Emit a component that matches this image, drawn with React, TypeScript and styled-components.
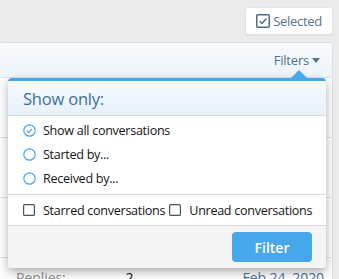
import React from 'react';
import styled, { createGlobalStyle } from 'styled-components';

const GlobalStyle = createGlobalStyle`
  html, body {
    margin: 0;
    padding: 0;
    background: #ebebeb;
    overflow: hidden;
  }
  body {
    width: 339px;
    height: 279px;
    font-family: "Open Sans", "Noto Sans", sans-serif;
  }
`;

const App = () => {
  return (
    <Page>
      <GlobalStyle />
      <TopBar>
        <SelectedButton>
          <svg width="14" height="14" viewBox="0 0 14 14">
            <rect x="0.75" y="0.75" width="12.5" height="12.5" rx="1" fill="none" stroke="#4f6b86" strokeWidth="1.5" />
            <path d="M3.6 7.2 L6 9.5 L10.4 4.6" fill="none" stroke="#4f6b86" strokeWidth="1.5" />
          </svg>
          Selected
        </SelectedButton>
      </TopBar>
      <Block>
        <BlockHeader>
          <FiltersLink>
            Filters <Caret />
          </FiltersLink>
        </BlockHeader>
        <ListRow />
        <ListRow />
        <ListRow />
        <ListRow>
          <RowMeta>
            <span className="label">Replies:</span>
            <span className="count">2</span>
            <span className="date">Feb 24, 2020</span>
          </RowMeta>
        </ListRow>

        {/* -------- filter menu -------- */}
        <Menu>
          <MenuArrow />
          <MenuHeader>Show only:</MenuHeader>
          <OptionList>
            <Option>
              <Radio checked />
              Show all conversations
            </Option>
            <Option>
              <Radio />
              Started by...
            </Option>
            <Option>
              <Radio />
              Received by...
            </Option>
          </OptionList>
          <CheckRow>
            <CheckLabel>
              <CheckBox />
              Starred conversations
            </CheckLabel>
            <CheckLabel>
              <CheckBox />
              Unread conversations
            </CheckLabel>
          </CheckRow>
          <MenuFooter>
            <FilterButton>Filter</FilterButton>
          </MenuFooter>
        </Menu>
      </Block>
    </Page>
  );
};

export default App;

const Radio = ({ checked }: { checked?: boolean }) => (
  <svg width="13" height="13" viewBox="0 0 13 13">
    <circle cx="6.5" cy="6.5" r="5.7" fill="none" stroke="#47a7eb" strokeWidth="1.2" />
    {checked && <path d="M3.9 6.7 L5.8 8.5 L9.1 4.9" fill="none" stroke="#47a7eb" strokeWidth="1.2" />}
  </svg>
);

const CheckBox = () => (
  <svg width="12" height="12" viewBox="0 0 12 12">
    <rect x="0.6" y="0.6" width="10.8" height="10.8" rx="1" fill="none" stroke="#4b5557" strokeWidth="1.2" />
  </svg>
);

const Page = styled.div`
  padding: 7px 6px 0 0;
`;

const TopBar = styled.div`
  display: flex;
  justify-content: flex-end;
`;

const SelectedButton = styled.button`
  display: flex;
  align-items: center;
  gap: 3px;
  height: 28px;
  padding: 0 10px;
  background: #fff;
  border: 1px solid #e3e3e3;
  border-radius: 3px;
  box-shadow: 0 1px 1px rgba(0, 0, 0, 0.06);
  color: #5a7390;
  font-family: inherit;
  font-size: 13px;
  letter-spacing: -0.3px;
`;

const Block = styled.div`
  position: relative;
  margin-top: 7px;
  margin-left: -2px;
  background: #fff;
  border: 1px solid #dcdfe3;
  border-radius: 3px;
`;

const BlockHeader = styled.div`
  display: flex;
  justify-content: flex-end;
  align-items: center;
  height: 34px;
  padding-right: 12px;
  background: linear-gradient(#f7fafd, #eef4fa);
  border-bottom: 1px solid #dce3ea;
  border-radius: 3px 3px 0 0;
`;

const FiltersLink = styled.span`
  display: flex;
  align-items: center;
  gap: 3px;
  color: #4d7196;
  font-size: 13px;
  letter-spacing: -0.2px;
`;

const Caret = styled.span`
  width: 0;
  height: 0;
  border-left: 4px solid transparent;
  border-right: 4px solid transparent;
  border-top: 5px solid #4d7196;
`;

const ListRow = styled.div`
  height: 59px;
  background: #fdfdfd;
  border-bottom: 1px solid #e2e2e2;
  &:first-of-type {
    height: 58px;
  }
`;

const RowMeta = styled.div`
  display: flex;
  padding: 10px 8px 0 17px;
  font-size: 14px;
  letter-spacing: -0.1px;
  color: #8c8c8c;
  .count {
    margin-left: 60px;
    color: #141414;
  }
  .date {
    margin-left: auto;
    color: #47709a;
  }
`;

const Menu = styled.div`
  position: absolute;
  top: 35px;
  left: 9px;
  width: 318px;
  background: #fff;
  border-top: 3px solid #47a7eb;
  border-radius: 4px;
  box-shadow: 0 4px 10px rgba(0, 0, 0, 0.3);
`;

const MenuArrow = styled.span`
  position: absolute;
  top: -11px;
  left: 283px;
  width: 0;
  height: 0;
  border-left: 8px solid transparent;
  border-right: 8px solid transparent;
  border-bottom: 8px solid #47a7eb;
`;

const MenuHeader = styled.div`
  display: flex;
  align-items: center;
  height: 34px;
  padding: 0 15px;
  background: linear-gradient(#f6fafe, #e6f1fb);
  border-bottom: 1px solid #dadada;
  color: #3c7096;
  font-size: 16.5px;
  letter-spacing: -0.2px;
`;

const OptionList = styled.div`
  padding: 2px 15px 4px;
  border-bottom: 1px solid #dadada;
`;

const Option = styled.div`
  display: flex;
  align-items: center;
  gap: 7px;
  height: 24px;
  color: #141414;
  font-size: 12.6px;
  letter-spacing: -0.3px;
`;

const CheckRow = styled.div`
  display: flex;
  align-items: center;
  gap: 4px;
  height: 30px;
  padding: 0 15px;
  border-bottom: 1px solid #dadada;
`;

const CheckLabel = styled.label`
  display: flex;
  align-items: center;
  gap: 8px;
  color: #141414;
  font-size: 12.6px;
  letter-spacing: -0.3px;
  white-space: nowrap;
`;

const MenuFooter = styled.div`
  display: flex;
  justify-content: flex-end;
  padding: 6px 14px;
  background: #f5f5f5;
  border-radius: 0 0 4px 4px;
`;

const FilterButton = styled.button`
  width: 80px;
  height: 30px;
  background: #47a7eb;
  border: none;
  border-radius: 4px;
  color: #fff;
  font-family: inherit;
  font-size: 14px;
  font-weight: 600;
`;
